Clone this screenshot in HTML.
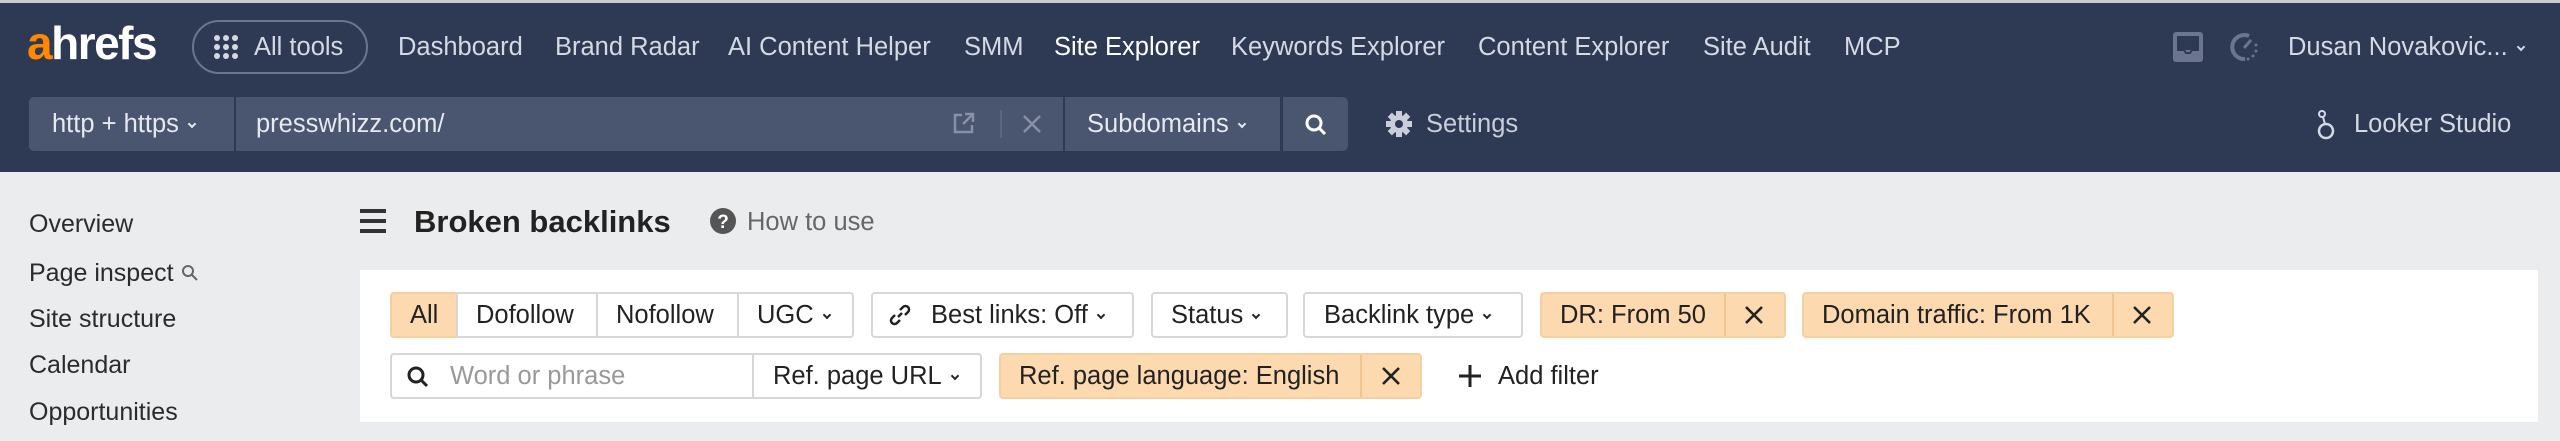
<!DOCTYPE html>
<html><head><meta charset="utf-8"><style>
*{margin:0;padding:0;box-sizing:border-box}
body{width:2560px;height:441px;background:#ebecee;font-family:"Liberation Sans",sans-serif;position:relative;overflow:hidden}
.a{position:absolute;white-space:nowrap}
.hdr{left:0;top:0;width:2560px;height:172px;background:#2e3a54;border-top:3px solid #c9cbd0}
.nav{top:30px;font-size:25.5px;color:#d4d9e3;line-height:34px}
.box{background:#4a5570;height:54px;top:97px;color:#e6e9ef;font-size:25.5px;line-height:54px}
.side{left:29px;font-size:25px;color:#2b2b2b;line-height:30px}
.f{top:292px;height:46px;border:2px solid #d5d7db;background:#fff;border-radius:4px;font-size:25.5px;color:#222;line-height:42px}
.o{background:#fdd9b0;border-color:#f5cf9f}
.f2{top:353px}
.chev{display:inline-block;width:6px;height:6px;border-right:2px solid currentColor;border-bottom:2px solid currentColor;transform:rotate(45deg);margin-left:10px;position:relative;top:-5px}
.xs{position:absolute}
</style></head><body>
<div class="a hdr"></div>
<div class="a" style="left:27px;top:18px;font-size:46px;font-weight:bold;color:#fff;letter-spacing:-1.5px;line-height:50px"><span style="color:#ff8800">a</span>hrefs</div>
<div class="a" style="left:192px;top:20px;width:176px;height:54px;border:2px solid #6b7590;border-radius:27px"></div>
<svg class="a" style="left:214px;top:35px" width="24" height="24"><g fill="#d4d9e3"><circle cx="3" cy="3" r="3"/><circle cx="12" cy="3" r="3"/><circle cx="21" cy="3" r="3"/><circle cx="3" cy="12" r="3"/><circle cx="12" cy="12" r="3"/><circle cx="21" cy="12" r="3"/><circle cx="3" cy="21" r="3"/><circle cx="12" cy="21" r="3"/><circle cx="21" cy="21" r="3"/></g></svg>
<div class="a nav" style="left:254px">All tools</div>
<div class="a nav" style="left:398px">Dashboard</div>
<div class="a nav" style="left:555px">Brand Radar</div>
<div class="a nav" style="left:728px">AI Content Helper</div>
<div class="a nav" style="left:964px">SMM</div>
<div class="a nav" style="left:1054px;color:#fff">Site Explorer</div>
<div class="a nav" style="left:1231px">Keywords Explorer</div>
<div class="a nav" style="left:1478px">Content Explorer</div>
<div class="a nav" style="left:1703px">Site Audit</div>
<div class="a nav" style="left:1844px">MCP</div>
<svg class="a" style="left:2173px;top:32px" width="30" height="30"><rect x="0" y="0" width="30" height="30" rx="3" fill="#6b7590"/><rect x="4" y="4" width="22" height="14" fill="#2e3a54"/><path d="M4 18h7l2 3h4l2-3h7" stroke="#2e3a54" stroke-width="2" fill="none"/></svg>
<svg class="a" style="left:2229px;top:31px" width="32" height="32"><path d="M20 5A12 12 0 1 0 16 28" stroke="#6b7590" stroke-width="4" fill="none"/><path d="M15 17l7-8" stroke="#6b7590" stroke-width="3"/><g fill="#6b7590"><circle cx="27" cy="14" r="1.5"/><circle cx="27" cy="20" r="1.5"/><circle cx="24" cy="25" r="1.5"/><circle cx="19" cy="28" r="1.5"/></g></svg>
<div class="a nav" style="left:2288px">Dusan Novakovic...<span class="chev"></span></div>

<div class="a box" style="left:29px;width:205px;border-radius:5px 0 0 5px;padding-left:23px">http + https<span class="chev"></span></div>
<div class="a box" style="left:236px;width:827px;padding-left:20px">presswhizz.com/</div>
<svg class="a" style="left:952px;top:111px" width="24" height="24"><path d="M10 4H3v17h17v-7M13 3h8v8M21 3L11 13" stroke="#8790a6" stroke-width="2.5" fill="none"/></svg>
<div class="a" style="left:1000px;top:110px;width:2px;height:28px;background:#5c6680"></div>
<svg class="a" style="left:1022px;top:114px" width="20" height="20"><path d="M2 2l16 16M18 2L2 18" stroke="#8790a6" stroke-width="2.5"/></svg>
<div class="a box" style="left:1065px;width:215px;padding-left:22px">Subdomains<span class="chev"></span></div>
<div class="a box" style="left:1283px;width:65px;border-radius:0 5px 5px 0"></div>
<svg class="a" style="left:1304px;top:113px" width="24" height="24"><circle cx="10" cy="10" r="7" stroke="#fff" stroke-width="3" fill="none"/><path d="M15 15l6 6" stroke="#fff" stroke-width="3"/></svg>
<svg class="a" style="left:1386px;top:111px" width="26" height="26"><g fill="#c9ced9"><circle cx="13" cy="13" r="9"/><rect x="10" y="0" width="6" height="26"/><rect x="0" y="10" width="26" height="6"/><rect x="10" y="0" width="6" height="26" transform="rotate(45 13 13)"/><rect x="10" y="0" width="6" height="26" transform="rotate(-45 13 13)"/></g><circle cx="13" cy="13" r="4" fill="#2e3a54"/></svg>
<div class="a box" style="left:1426px;background:none;color:#c9ced9">Settings</div>
<svg class="a" style="left:2316px;top:109px" width="20" height="32"><circle cx="10" cy="22" r="7" stroke="#d4d9e3" stroke-width="2.5" fill="none"/><circle cx="6" cy="5" r="3" stroke="#d4d9e3" stroke-width="2" fill="none"/><path d="M7 8l2 7" stroke="#d4d9e3" stroke-width="2"/></svg>
<div class="a box" style="left:2354px;background:none;color:#d4d9e3">Looker Studio</div>

<div class="a side" style="top:209px">Overview</div>
<div class="a side" style="top:258px">Page inspect <svg width="18" height="18" style="vertical-align:-1px"><circle cx="7" cy="7" r="5" stroke="#666" stroke-width="2" fill="none"/><path d="M11 11l5 5" stroke="#666" stroke-width="2"/></svg></div>
<div class="a side" style="top:304px">Site structure</div>
<div class="a side" style="top:350px">Calendar</div>
<div class="a side" style="top:397px">Opportunities</div>

<svg class="a" style="left:360px;top:209px" width="26" height="24"><g fill="#333"><rect y="0" width="26" height="4"/><rect y="10" width="26" height="4"/><rect y="20" width="26" height="4"/></g></svg>
<div class="a" style="left:414px;top:204px;font-size:31px;font-weight:bold;color:#222;line-height:36px">Broken backlinks</div>
<svg class="a" style="left:710px;top:208px" width="26" height="26"><circle cx="13" cy="13" r="13" fill="#555"/><text x="13" y="20" text-anchor="middle" font-size="19" font-weight="bold" fill="#fff" font-family="Liberation Sans">?</text></svg>
<div class="a" style="left:747px;top:206px;font-size:25.5px;color:#666;line-height:32px">How to use</div>

<div class="a" style="left:360px;top:270px;width:2178px;height:152px;background:#fff"></div>

<div class="a f o" style="left:390px;width:68px;border-radius:4px 0 0 4px;padding-left:18px">All</div>
<div class="a f" style="left:456px;width:142px;border-radius:0;padding-left:18px">Dofollow</div>
<div class="a f" style="left:596px;width:143px;border-radius:0;padding-left:18px">Nofollow</div>
<div class="a f" style="left:737px;width:117px;border-radius:0 4px 4px 0;padding-left:18px">UGC<span class="chev"></span></div>
<div class="a f" style="left:871px;width:263px;padding-left:58px">Best links: Off<span class="chev"></span></div>
<svg class="a" style="left:887px;top:302px" width="26" height="26"><path d="M11 15l4-4M8 13l-3 3a3.5 3.5 0 0 0 5 5l3-3M18 13l3-3a3.5 3.5 0 0 0-5-5l-3 3" stroke="#222" stroke-width="2.5" fill="none"/></svg>
<div class="a f" style="left:1151px;width:137px;padding-left:18px">Status<span class="chev"></span></div>
<div class="a f" style="left:1303px;width:220px;padding-left:19px">Backlink type<span class="chev"></span></div>
<div class="a f o" style="left:1540px;width:246px;padding-left:18px">DR: From 50</div>
<div class="a" style="left:1724px;top:294px;width:2px;height:42px;background:#efc48f"></div>
<svg class="a" style="left:1744px;top:305px" width="20" height="20"><path d="M2 2l16 16M18 2L2 18" stroke="#222" stroke-width="2.6"/></svg>
<div class="a f o" style="left:1802px;width:372px;padding-left:18px">Domain traffic: From 1K</div>
<div class="a" style="left:2112px;top:294px;width:2px;height:42px;background:#efc48f"></div>
<svg class="a" style="left:2132px;top:305px" width="20" height="20"><path d="M2 2l16 16M18 2L2 18" stroke="#222" stroke-width="2.6"/></svg>

<div class="a f f2" style="left:390px;width:364px;border-radius:4px 0 0 4px;padding-left:58px;color:#999">Word or phrase</div>
<svg class="a" style="left:406px;top:365px" width="24" height="24"><circle cx="10" cy="10" r="7" stroke="#222" stroke-width="3" fill="none"/><path d="M15 15l6 6" stroke="#222" stroke-width="3"/></svg>
<div class="a f f2" style="left:752px;width:230px;border-radius:0 4px 4px 0;padding-left:19px">Ref. page URL<span class="chev"></span></div>
<div class="a f f2 o" style="left:999px;width:423px;padding-left:18px">Ref. page language: English</div>
<div class="a" style="left:1360px;top:355px;width:2px;height:42px;background:#efc48f"></div>
<svg class="a" style="left:1381px;top:366px" width="20" height="20"><path d="M2 2l16 16M18 2L2 18" stroke="#222" stroke-width="2.6"/></svg>
<svg class="a" style="left:1459px;top:365px" width="22" height="22"><path d="M11 0v22M0 11h22" stroke="#222" stroke-width="3"/></svg>
<div class="a" style="left:1498px;top:360px;font-size:25.5px;color:#222;line-height:32px">Add filter</div>
</body></html>
